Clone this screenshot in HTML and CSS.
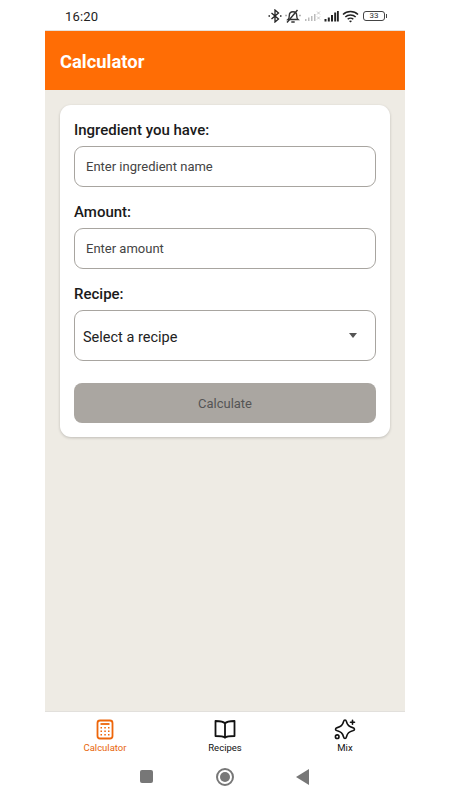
FILE: index.html
```html
<!DOCTYPE html>
<html>
    <head>
        <meta charset="UTF-8">
        <title>Calculator</title>
        <link rel="stylesheet" href="styles.css">
    </head>
    <body>
        <div class="phone">
            <div class="status-bar">
                <span class="time">16:20</span>
                <div class="status-icons">
                    <svg width="14" height="14" viewBox="0 0 14 14" fill="none" stroke="#222" stroke-width="1.3"><path d="M3.5 4l7 6-3.5 3V1l3.500 3-7 6"/><path d="M0.500 7h1.500M12 7h1.500" stroke-width="1.500"/></svg>
                    <svg width="16" height="15" viewBox="0 0 16 15" fill="none" stroke="#333" stroke-width="1.400"><path d="M3 10.500c1.200-1 1.300-2 1.300-4 0-2.200 1.500-3.800 3.700-3.800s3.700 1.600 3.700 3.800c0 2 .1 3 1.300 4z"/><path d="M6.300 13h3.400M2 13.500L12.500 1"/><path d="M0.300 6.500h1.500M14.200 6.500h1.500" stroke="#999"/></svg>
                    <svg width="17" height="12" viewBox="0 0 17 12"><path d="M1 9h1.500v2H1zM4 7.500h1.500V11H4zM7 6h1.500v5H7zM10 4h1.500v7H10z" fill="#bbb"/><path d="M13 1.500l3 3M16 1.500l-3 3M13 6.500l3 3M16 6.500l-3 3" stroke="#bbb" stroke-width="0.800"/></svg>
                    <svg width="15" height="12" viewBox="0 0 15 12" fill="#222"><path d="M0.500 9h2v2.500h-2zM3.800 7.500h2v4h-2zM7 5h2v6.500H7zM10.200 2.500h2v9h-2zM13 1h1.800v10.500H13z"/></svg>
                    <svg width="17" height="13" viewBox="0 0 17 13" fill="none" stroke="#222" stroke-width="1.500"><path d="M1 4.500c4-4 11-4 15 0M3.300 7c2.800-2.800 7.600-2.800 10.400 0M5.700 9.300c1.500-1.500 4.100-1.500 5.600 0"/><path d="M8.500 12.500l-1.500-1.600c.8-.7 2.200-.7 3 0z" fill="#222" stroke="none"/></svg>
                    <div class="battery"><span class="battery-level">33</span></div>
                </div>
            </div>
            <header class="app-header">
                <h1 class="app-title">Calculator</h1>
            </header>
            <main class="content">
                <form class="card">
                    <label class="field-label">Ingredient you have:</label>
                    <div class="text-input">Enter ingredient name</div>
                    <label class="field-label">Amount:</label>
                    <div class="text-input">Enter amount</div>
                    <label class="field-label">Recipe:</label>
                    <div class="select-input">
                        <span>Select a recipe</span>
                        <span class="caret"></span>
                    </div>
                    <div class="calc-btn">Calculate</div>
                </form>
            </main>
            <nav class="tab-bar">
                <div class="tab tab-active">
                    <svg width="24" height="24" viewBox="0 0 24 24" fill="none" stroke="#ee660a" stroke-width="1.800"><rect x="4.500" y="3.500" width="15" height="18" rx="2.500"/><path d="M7.500 7h9" stroke-width="1.800"/><path d="M7.500 10.800h1.500M11.300 10.800h1.500M15 10.800h1.500M7.500 14.300h1.500M11.300 14.300h1.500M15 14.300h1.500M7.500 17.800h1.500M11.300 17.800h1.500M15 17.800h1.500" stroke-width="1.500"/></svg>
                    <span class="tab-label">Calculator</span>
                </div>
                <div class="tab">
                    <svg width="24" height="24" viewBox="0 0 24 24" fill="none" stroke="#111" stroke-width="1.800" stroke-linejoin="round"><path d="M12 6.500C10.500 4.500 8 4 2.500 4v15c5 0 8 .3 9.500 1.500 1.500-1.200 4.500-1.500 9.500-1.500V4C16 4 13.500 4.500 12 6.500zM12 6.500v15"/></svg>
                    <span class="tab-label">Recipes</span>
                </div>
                <div class="tab">
                    <svg width="24" height="24" viewBox="0 0 24 24" fill="none" stroke="#111" stroke-width="1.600" stroke-linejoin="round"><path d="M12 3c.9 0 1.200.6 1.500 1.800.8 3.300 2.200 4.900 6.200 5.800 1.200.3 1.800.7 1.800 1.600 0 .9-.6 1.300-1.800 1.600-4 .9-5.400 2.500-6.200 5.900-.3 1.200-.6 1.800-1.500 1.800s-1.200-.6-1.500-1.800c-.8-3.400-2.200-5-6.200-5.900-1.200-.3-1.800-.7-1.800-1.600 0-.9.6-1.300 1.800-1.600 4-.9 5.400-2.500 6.200-5.800C10.800 3.600 11.100 3 12 3z"/><path d="M19.500 3.300v4M17.500 5.300h4" stroke-linecap="round"/><circle cx="4.200" cy="19.700" r="1.800"/></svg>
                    <span class="tab-label">Mix</span>
                </div>
            </nav>
            <div class="system-nav">
                <span class="sys-square"></span>
                <span class="sys-circle"><span class="sys-dot"></span></span>
                <span class="sys-back"></span>
            </div>
        </div>
    </body>
</html>
```

FILE: styles.css
```css
* {
    padding: 0;
    margin: 0;
    box-sizing: border-box;
}

body {
    width: 450px;
    height: 800px;
    background-color: #fff;
    font-family: Roboto, "Liberation Sans", sans-serif;
    display: flex;
    justify-content: center;
    overflow: hidden;
}

.phone {
    width: 360px;
    height: 800px;
    display: flex;
    flex-direction: column;
}

.status-bar {
    height: 31px;
    flex-shrink: 0;
    display: flex;
    align-items: center;
    justify-content: space-between;
    padding: 2px 20px 0 20px;
    background-color: #fff;
    border-bottom: 1px solid #e6e1dc;
}

.time {
    font-size: 13px;
    color: #222;
    letter-spacing: 0.2px;
}

.status-icons {
    display: flex;
    align-items: center;
    gap: 3px;
}

.battery {
    position: relative;
    width: 22px;
    height: 10px;
    border: 1px solid #444;
    border-radius: 3px;
    display: flex;
    align-items: center;
    justify-content: center;
    margin-left: 1px;
}

.battery::after {
    content: "";
    position: absolute;
    right: -3px;
    top: 2px;
    width: 1px;
    height: 4px;
    background-color: #444;
}

.battery-level {
    font-size: 8px;
    line-height: 8px;
    color: #333;
}

.app-header {
    height: 59px;
    flex-shrink: 0;
    display: flex;
    align-items: center;
    padding: 2px 0 0 15px;
    background-color: #ff6d05;
}

.app-title {
    font-size: 18.4px;
    font-weight: 700;
    color: #fff;
}

.content {
    flex: 1;
    padding: 15px;
    background-color: #eeebe4;
}

.card {
    display: flex;
    flex-direction: column;
    padding: 15px 14px 14px 14px;
    background-color: #fff;
    border-radius: 11px;
    box-shadow: 0 1px 3px rgba(0, 0, 0, 0.2);
}

.field-label {
    height: 20px;
    line-height: 20px;
    margin-bottom: 6px;
    font-size: 15px;
    font-weight: 500;
    color: #1a1a1a;
}

.text-input {
    height: 41px;
    margin-bottom: 15px;
    padding-left: 11px;
    display: flex;
    align-items: center;
    font-size: 13px;
    color: #444;
    border: 1px solid #a8a5a0;
    border-radius: 9px;
}

.select-input {
    height: 51px;
    padding: 3px 18px 0 8px;
    display: flex;
    align-items: center;
    justify-content: space-between;
    font-size: 14.5px;
    color: #222;
    border: 1px solid #a8a5a0;
    border-radius: 9px;
}

.caret {
    width: 0;
    height: 0;
    margin-top: -3px;
    border-left: 4.5px solid transparent;
    border-right: 4.5px solid transparent;
    border-top: 5px solid #555;
}

.calc-btn {
    height: 40px;
    margin-top: 22px;
    display: flex;
    align-items: center;
    justify-content: center;
    font-size: 13px;
    color: #555;
    background-color: #aaa6a1;
    border-radius: 8px;
}

.tab-bar {
    height: 50px;
    flex-shrink: 0;
    display: flex;
    background-color: #fff;
    border-top: 1px solid #e2e0dc;
}

.tab {
    flex: 1;
    display: flex;
    flex-direction: column;
    align-items: center;
    padding-top: 5px;
    color: #111;
}

.tab-active {
    color: #e8650a;
}

.tab-label {
    margin-top: 1px;
    font-size: 9.5px;
    line-height: 12px;
}

.system-nav {
    height: 39px;
    flex-shrink: 0;
    display: flex;
    align-items: flex-start;
    justify-content: center;
    gap: 62px;
    padding: 7px 1px 0 0;
    background-color: #fff;
}

.sys-square {
    width: 13px;
    height: 13px;
    margin: 2px 1px 0 0;
    background-color: #777;
    border-radius: 2px;
}

.sys-circle {
    width: 18px;
    height: 18px;
    border: 2px solid #777;
    border-radius: 50%;
    display: flex;
    align-items: center;
    justify-content: center;
}

.sys-dot {
    width: 10px;
    height: 10px;
    background-color: #777;
    border-radius: 50%;
}

.sys-back {
    width: 0;
    height: 0;
    margin-top: 1px;
    border-top: 8px solid transparent;
    border-bottom: 8px solid transparent;
    border-right: 13px solid #777;
}
```
